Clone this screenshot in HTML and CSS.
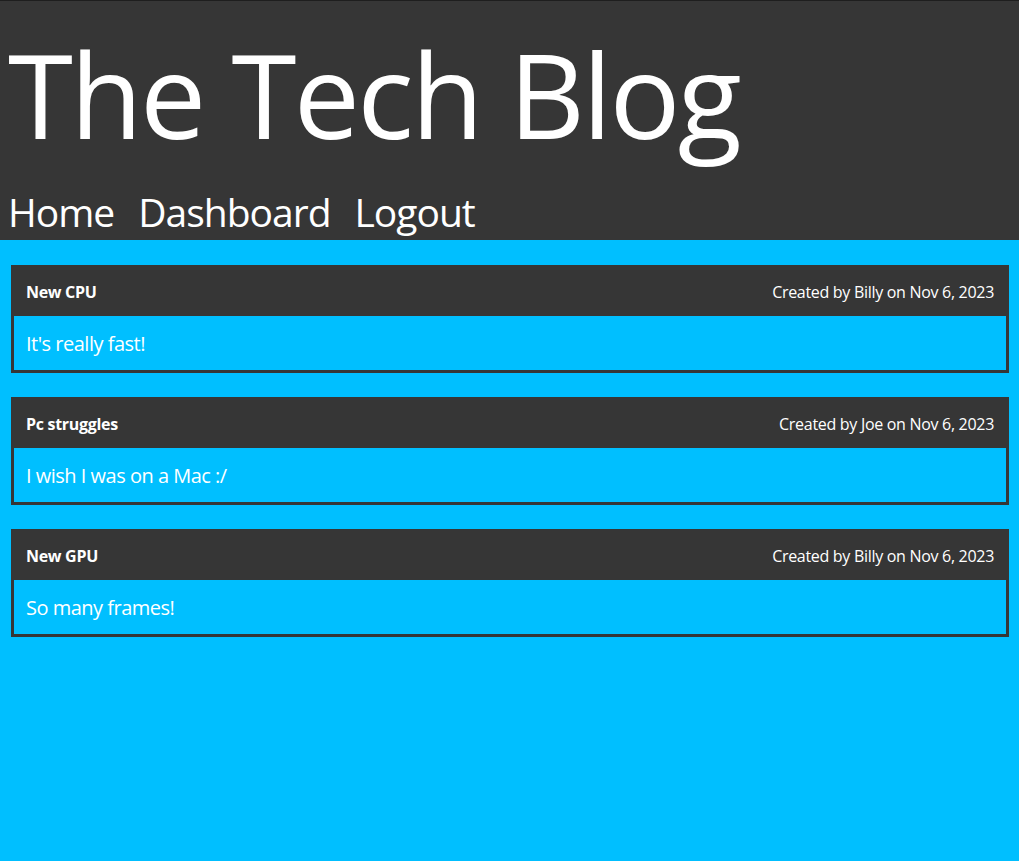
FILE: index.html
```html
<!DOCTYPE html>
<html lang="en">
<head>
<meta charset="utf-8">
<title>The Tech Blog</title>
<link rel="stylesheet" href="styles.css">
</head>
<body>
<header class="site-header">
  <h1 class="site-title">The Tech Blog</h1>
  <nav class="site-nav">
    <a href="#" class="nav-link">Home</a>
    <a href="#" class="nav-link">Dashboard</a>
    <a href="#" class="nav-link">Logout</a>
  </nav>
</header>
<main class="posts">
  <article class="post">
    <div class="post-head">
      <span class="post-title">New CPU</span>
      <span class="post-meta">Created by Billy on Nov 6, 2023</span>
    </div>
    <div class="post-body">It's really fast!</div>
  </article>
  <article class="post">
    <div class="post-head">
      <span class="post-title">Pc struggles</span>
      <span class="post-meta">Created by Joe on Nov 6, 2023</span>
    </div>
    <div class="post-body">I wish I was on a Mac :/</div>
  </article>
  <article class="post">
    <div class="post-head">
      <span class="post-title">New GPU</span>
      <span class="post-meta">Created by Billy on Nov 6, 2023</span>
    </div>
    <div class="post-body">So many frames!</div>
  </article>
</main>
</body>
</html>
```
FILE: styles.css
```css
html, body {
  margin: 0;
  padding: 0;
}
body {
  background: #00bfff;
  color: #ffffff;
  font-family: "Open Sans", "Noto Sans", sans-serif;
  min-height: 861px;
}
.site-header {
  background: #363636;
  border-top: 1px solid #1e1e1e;
  padding: 0 8px;
  height: 240px;
  box-sizing: border-box;
}
.site-title {
  margin: 0;
  padding-top: 34px;
  font-size: 118px;
  font-weight: 400;
  line-height: 118px;
  letter-spacing: -2.7px;
}
.site-nav {
  display: flex;
  gap: 24px;
  margin-top: 39px;
}
.nav-link {
  color: #ffffff;
  text-decoration: none;
  font-size: 39px;
  line-height: 39px;
  letter-spacing: -1px;
}
.posts {
  padding: 25px 10px 0 11px;
}
.post {
  border: 3px solid #363636;
  margin-bottom: 24px;
}
.post-head {
  background: #363636;
  display: flex;
  justify-content: space-between;
  align-items: center;
  padding: 12px;
  font-size: 16px;
  line-height: 24px;
}
.post-title {
  font-weight: 700;
  letter-spacing: -0.3px;
}
.post-meta {
  letter-spacing: -0.3px;
}
.post-body {
  padding: 13px 12px 11px;
  font-size: 20px;
  line-height: 30px;
  letter-spacing: -0.5px;
}
```
